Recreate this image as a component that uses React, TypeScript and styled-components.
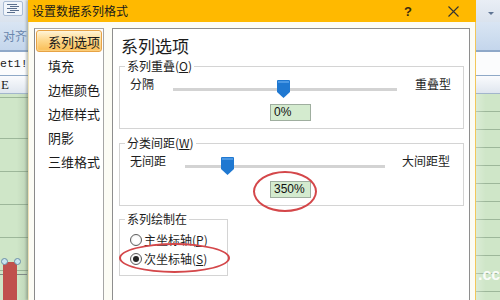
import React from "react";
import styled, { createGlobalStyle } from "styled-components";

const CJK = `"Noto Sans CJK SC", "Noto Sans", sans-serif`;

const GlobalStyle = createGlobalStyle`
  html, body { margin: 0; padding: 0; }
  body { width: 500px; height: 300px; overflow: hidden; font-family: ${CJK}; color: #1e1e1e; }
`;

const Root = styled.div`
  display: flex;
  width: 500px;
  height: 300px;
  overflow: hidden;
  background: #cfe6c8;
`;

/* ---------- spreadsheet behind the dialog ---------- */
const SheetStrip = styled.div<{ $w: number }>`
  width: ${(p) => p.$w}px;
  flex: none;
  display: flex;
  flex-direction: column;
  overflow: hidden;
`;

const QuickBar = styled.div`
  height: 22px;
  flex: none;
  box-sizing: border-box;
  background: linear-gradient(#e9eef5, #dae3ee);
  display: flex;
  align-items: flex-start;
  padding: 1px 0 0 3px;
`;

const ToolIcon = styled.div`
  width: 20px;
  height: 15px;
  box-sizing: border-box;
  border: 1px solid #aabcd4;
  border-radius: 2px;
  background: #f1f5fa;
  display: flex;
  align-items: center;
  justify-content: center;
`;

const DropArrow = styled.div`
  margin: 11px 0 0 9px;
  width: 0;
  height: 0;
  border-left: 3px solid transparent;
  border-right: 3px solid transparent;
  border-top: 3px solid #5f7594;
`;

const Ribbon = styled.div`
  height: 30px;
  flex: none;
  box-sizing: border-box;
  background: linear-gradient(#d9e5f3, #c4d6ec);
  border-bottom: 2px solid #8ea8c8;
  font-size: 12px;
  line-height: 28px;
  color: #6a86ad;
  padding-left: 3px;
  white-space: nowrap;
`;

const FormulaBar = styled.div`
  height: 24px;
  flex: none;
  box-sizing: border-box;
  background: #fbfcfd;
  border-bottom: 1px solid #8fa9c7;
  font-family: "Liberation Mono", monospace;
  font-size: 11.5px;
  line-height: 23px;
  color: #1a1a1a;
  white-space: nowrap;
`;

const ColHeader = styled.div`
  height: 18px;
  flex: none;
  box-sizing: border-box;
  background: linear-gradient(#fafbfd, #dfe6ef);
  border-bottom: 1px solid #a2b6cc;
  font-family: "Liberation Serif", serif;
  font-size: 13px;
  line-height: 17px;
  color: #222;
  padding-left: 1px;
`;

const Cells = styled.div<{ $step: number; $offset: number; $shade?: boolean }>`
  flex: 1;
  position: relative;
  background-color: #cfe6c8;
  background-image: ${(p) =>
      p.$shade
        ? "linear-gradient(90deg, rgba(0,0,0,0) 60%, rgba(60,80,60,0.12) 100%),"
        : "linear-gradient(90deg, rgba(255,255,255,0.25), rgba(255,255,255,0) 40%),"}
    repeating-linear-gradient(
      to bottom,
      transparent 0,
      transparent ${(p) => p.$step - 1}px,
      #9db79a ${(p) => p.$step - 1}px,
      #9db79a ${(p) => p.$step}px
    );
  background-position: 0 0, 0 ${(p) => p.$offset}px;
`;

const Bar = styled.div`
  position: absolute;
  left: 3px;
  top: 168px;
  width: 14px;
  height: 40px;
  background: #c0504d;
  border-radius: 3px 3px 0 0;
`;

const Handle = styled.div<{ $x: number }>`
  position: absolute;
  top: 164px;
  left: ${(p) => p.$x}px;
  width: 5px;
  height: 5px;
  border-radius: 50%;
  border: 1px solid #6b8ea6;
  background: #c8e4ee;
`;

const Axis = styled.div`
  position: absolute;
  left: 0;
  top: 180px;
  width: 27px;
  height: 1px;
  background: #7f8a86;
`;

const Watermark = styled.div`
  position: absolute;
  left: 2px;
  top: 172px;
  font-family: "Liberation Sans", sans-serif;
  font-weight: bold;
  font-size: 16px;
  color: rgba(255, 255, 255, 0.9);
`;

/* ---------- dialog ---------- */
const Dialog = styled.div`
  width: 448px;
  flex: none;
  display: flex;
  flex-direction: column;
  box-sizing: border-box;
  background: #fcfcf5;
  border-left: 1px solid #efe2b8;
  border-right: 1px solid #f2c75a;
  box-shadow: -2px 0 2px rgba(90, 100, 90, 0.35);
  position: relative;
  z-index: 1;
`;

const TitleBar = styled.div`
  height: 22px;
  flex: none;
  background: #ffb900;
  display: flex;
  align-items: center;
  padding-left: 4px;
  margin: 0 -1px;
`;

const Title = styled.div`
  font-size: 12px;
  line-height: 16px;
  color: #1a1a1a;
`;

const TitleButton = styled.div`
  width: 30px;
  height: 22px;
  display: flex;
  align-items: center;
  justify-content: center;
  font-family: "Liberation Sans", sans-serif;
  font-size: 13px;
  font-weight: bold;
  color: #3a2a10;
`;

const TitleButtons = styled.div`
  margin-left: auto;
  display: flex;
  gap: 15px;
  padding-right: 8px;
`;

const Body = styled.div`
  flex: 1;
  display: flex;
  gap: 8px;
  padding: 6px 5px 0 5px;
  overflow: hidden;
`;

const Nav = styled.div`
  width: 70px;
  flex: none;
  box-sizing: border-box;
  border: 1px solid #a6a6a6;
  border-left-color: #8a8a8a;
  background: #fff;
  padding: 1px;
  margin-bottom: -6px;
  display: flex;
  flex-direction: column;
  gap: 2.2px;
`;

const NavItem = styled.div<{ $active?: boolean }>`
  height: 22px;
  box-sizing: border-box;
  display: flex;
  align-items: center;
  padding-left: 11px;
  font-size: 13px;
  color: #1a1a1a;
  border-radius: 3px;
  border: 1px solid ${(p) => (p.$active ? "#e7a345" : "transparent")};
  background: ${(p) =>
    p.$active ? "linear-gradient(#fff4d6, #fed98f 45%, #f9bc52)" : "transparent"};
  box-shadow: ${(p) => (p.$active ? "inset 0 0 2px #fff6e0" : "none")};
`;

const Panel = styled.div`
  flex: 1;
  position: relative;
  box-sizing: border-box;
  border: 1px solid #8e8e8e;
  background: #fff;
  padding: 7px 5px 0 6px;
  margin-bottom: -6px;
`;

const PanelTitle = styled.div`
  font-size: 17px;
  line-height: 20px;
  padding-left: 2px;
  color: #1c1c1c;
`;

const Group = styled.fieldset<{ $top: number; $w?: number }>`
  margin: ${(p) => p.$top}px 0 0;
  padding: 0 0 7px;
  border: 1px solid #d4d4d4;
  min-width: 0;
  width: ${(p) => (p.$w ? `${p.$w}px` : "auto")};
  box-sizing: border-box;
`;

const Legend = styled.legend`
  margin-left: 5px;
  padding: 0 2px;
  font-size: 12px;
  line-height: 16px;
  color: #1c1c1c;
`;

const Key = styled.span`
  text-decoration: underline;
  text-underline-offset: 1px;
`;

const SliderRow = styled.div`
  display: flex;
  align-items: flex-start;
  height: 24px;
  padding-left: 10px;
`;

const RowLabel = styled.div<{ $w?: number; $gap?: number }>`
  width: ${(p) => (p.$w ? `${p.$w}px` : "auto")};
  margin-left: ${(p) => p.$gap ?? 0}px;
  flex: none;
  font-size: 12px;
  line-height: 20px;
  white-space: nowrap;
`;

const SliderBox = styled.div<{ $w: number }>`
  width: ${(p) => p.$w}px;
  height: 24px;
  flex: none;
  position: relative;
`;

const Track = styled.div`
  margin-top: 14px;
  height: 3px;
  background: #d3d3d3;
`;

const Thumb = styled.svg`
  position: absolute;
  top: 6px;
`;

const ValueBox = styled.div`
  margin: 6px 0 0 150px;
  width: 41px;
  height: 17px;
  box-sizing: border-box;
  background: #d4ebcf;
  border: 1px solid #9fae9f;
  font-family: "Liberation Sans", sans-serif;
  font-size: 12px;
  line-height: 15px;
  padding-left: 3px;
  color: #111;
`;

const RadioList = styled.div`
  padding: 3px 0 0;
  display: flex;
  flex-direction: column;
`;

const RadioRow = styled.div`
  height: 19px;
  display: flex;
  align-items: center;
  gap: 2px;
  padding-left: 10px;
  font-size: 12px;
  white-space: nowrap;
`;

const RadioDot = styled.div<{ $checked?: boolean }>`
  width: 12px;
  height: 12px;
  box-sizing: border-box;
  border-radius: 50%;
  border: 1px solid #5c5c5c;
  background: radial-gradient(circle, #fff 40%, #e6e6e6 100%);
  display: flex;
  align-items: center;
  justify-content: center;
  &::after {
    content: "";
    display: ${(p) => (p.$checked ? "block" : "none")};
    width: 6px;
    height: 6px;
    border-radius: 50%;
    background: #222;
  }
`;

const Ring = styled.div<{ $x: number; $y: number; $w: number; $h: number }>`
  position: absolute;
  left: ${(p) => p.$x}px;
  top: ${(p) => p.$y}px;
  width: ${(p) => p.$w}px;
  height: ${(p) => p.$h}px;
  box-sizing: border-box;
  border: 2.5px solid #d4474a;
  border-radius: 50%;
  pointer-events: none;
`;

const ThumbIcon = ({ left }: { left: number }) => (
  <Thumb width="13" height="18" viewBox="0 0 13 18" style={{ left }}>
    <path d="M1 0 H12 A1 1 0 0 1 13 1 V12 L6.5 18 L0 12 V1 A1 1 0 0 1 1 0 Z" fill="#1f78d1" />
    <path d="M1 1 H12 V3 H1 Z" fill="#4b98e4" />
  </Thumb>
);

const Slider = ({
  label,
  labelW,
  width,
  thumb,
  right,
  gap,
}: {
  label: string;
  labelW: number;
  width: number;
  thumb: number;
  right: string;
  gap: number;
}) => (
  <SliderRow>
    <RowLabel $w={labelW}>{label}</RowLabel>
    <SliderBox $w={width}>
      <Track />
      <ThumbIcon left={thumb} />
    </SliderBox>
    <RowLabel $gap={gap}>{right}</RowLabel>
  </SliderRow>
);

const navItems = ["系列选项", "填充", "边框颜色", "边框样式", "阴影", "三维格式"];

export default function App() {
  return (
    <>
      <GlobalStyle />
      <Root>
        <SheetStrip $w={28}>
          <QuickBar>
            <ToolIcon>
              <svg width="12" height="9" viewBox="0 0 12 9">
                <path d="M0 0.5 H10 M3 2.5 H12 M0 4.5 H10 M3 6.5 H12 M0 8.5 H8" stroke="#5a6f8e" strokeWidth="1" />
              </svg>
            </ToolIcon>
          </QuickBar>
          <Ribbon>对齐</Ribbon>
          <FormulaBar>et1!</FormulaBar>
          <ColHeader>E</ColHeader>
          <Cells $step={33} $offset={12} $shade>
            <Axis />
            <Bar />
            <Handle $x={1} />
            <Handle $x={14} />
          </Cells>
        </SheetStrip>

        <Dialog>
          <TitleBar>
            <Title>设置数据系列格式</Title>
            <TitleButtons>
              <TitleButton>?</TitleButton>
              <TitleButton>
                <svg width="11" height="11" viewBox="0 0 11 11">
                  <path d="M0.5 0.5 L10.5 10.5 M10.5 0.5 L0.5 10.5" stroke="#333" strokeWidth="1.1" />
                </svg>
              </TitleButton>
            </TitleButtons>
          </TitleBar>
          <Body>
            <Nav>
              {navItems.map((n, i) => (
                <NavItem key={n} $active={i === 0}>
                  {n}
                </NavItem>
              ))}
            </Nav>
            <Panel>
              <PanelTitle>系列选项</PanelTitle>
              <Group $top={2}>
                <Legend>
                  系列重叠(<Key>O</Key>)
                </Legend>
                <Slider label="分隔" labelW={43} width={224} thumb={104} right="重叠型" gap={18} />
                <ValueBox>0%</ValueBox>
              </Group>
              <Group $top={6}>
                <Legend>
                  分类间距(<Key>W</Key>)
                </Legend>
                <Slider label="无间距" labelW={55} width={200} thumb={36} right="大间距型" gap={17} />
                <ValueBox>350%</ValueBox>
              </Group>
              <Group $top={5} $w={109}>
                <Legend>系列绘制在</Legend>
                <RadioList>
                  <RadioRow>
                    <RadioDot />
                    <span>
                      主坐标轴(<Key>P</Key>)
                    </span>
                  </RadioRow>
                  <RadioRow>
                    <RadioDot $checked />
                    <span>
                      次坐标轴(<Key>S</Key>)
                    </span>
                  </RadioRow>
                </RadioList>
              </Group>
              <Ring $x={140} $y={142} $w={64} $h={41} />
              <Ring $x={6} $y={214} $w={111} $h={30} />
            </Panel>
          </Body>
        </Dialog>

        <SheetStrip $w={24}>
          <QuickBar>
            <DropArrow />
          </QuickBar>
          <Ribbon />
          <FormulaBar />
          <ColHeader />
          <Cells $step={18} $offset={0}>
            <Watermark>.cc</Watermark>
          </Cells>
        </SheetStrip>
      </Root>
    </>
  );
}
